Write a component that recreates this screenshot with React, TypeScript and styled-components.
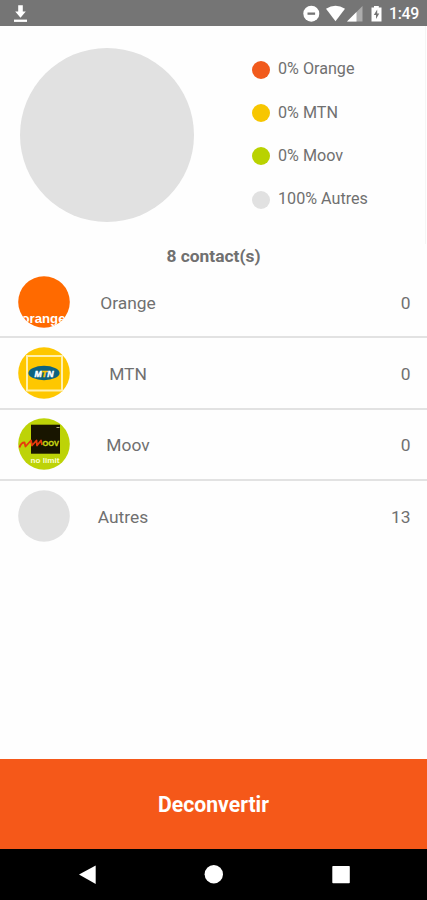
import React from "react";
import styled, { createGlobalStyle } from "styled-components";

const GlobalStyle = createGlobalStyle`
  * { box-sizing: border-box; }
  body { margin: 0; background: #fff; font-family: Roboto, sans-serif; color: #707070; }
`;

const Screen = styled.div`
  width: 427px;
  height: 900px;
  display: flex;
  flex-direction: column;
  background: #fefefe;
  overflow: hidden;
`;

const StatusBar = styled.header`
  height: 26px;
  flex: none;
  background: #757575;
  display: flex;
  justify-content: space-between;
`;

const StatusIcons = styled.svg`
  display: block;
  height: 26px;
`;

const StatusRight = styled.div`
  display: flex;
`;

const Clock = styled.span`
  width: 38px;
  color: #fff;
  font-size: 15.8px;
  font-weight: 500;
  line-height: 28px;
  letter-spacing: -0.3px;
`;

const Summary = styled.section`
  height: 218px;
  width: 426px;
  flex: none;
  display: flex;
  padding: 22px 0 0 20px;
  border-right: 1px solid #f5f5f5;
`;

const Pie = styled.div`
  width: 174px;
  height: 174px;
  border-radius: 50%;
  background: #e1e1e1;
`;

const Legend = styled.ul`
  list-style: none;
  margin: 0 0 0 58px;
  padding: 0;
`;

const LegendItem = styled.li`
  height: 43.4px;
  display: flex;
  align-items: center;
  gap: 8px;
  font-size: 16.15px;
  line-height: 20px;
  white-space: nowrap;
`;

const Dot = styled.span<{ $color: string }>`
  width: 18px;
  height: 18px;
  border-radius: 50%;
  background: ${(p) => p.$color};
`;

const LegendLabel = styled.span`
  margin-top: -1px;
`;

const Title = styled.h1`
  margin: 0;
  height: 23px;
  flex: none;
  font-size: 17.4px;
  line-height: 25px;
  font-weight: 700;
  text-align: center;
`;

const List = styled.ul`
  list-style: none;
  margin: 0;
  padding: 0;
  flex: 1;
`;

const Row = styled.li`
  height: 71.3px;
  display: flex;
  align-items: center;
  padding: 0 16.5px 0 17.5px;
  border-bottom: 2px solid #e2e2e2;
  font-size: 17.4px;
  &:last-child { border-bottom: 0; height: 69.3px; }
`;

const Logo = styled.svg`
  width: 52px;
  height: 52px;
  display: block;
`;

const Name = styled.span<{ $width: number }>`
  width: ${(p) => p.$width}px;
  text-align: center;
  padding-top: 2px;
`;

const Count = styled.span`
  margin-left: auto;
  padding-top: 2px;
`;

const Action = styled.button`
  height: 90.5px;
  flex: none;
  border: 0;
  padding: 2px 0 0;
  background: #f55819;
  color: #fff;
  font: 700 21.2px/88px Roboto, sans-serif;
`;

const NavBar = styled.nav`
  height: 51px;
  flex: none;
  background: #000;
  display: flex;
`;

const NavIcons = styled.svg`
  display: block;
`;

const legend = [
  { color: "#f15a1c", label: "0% Orange" },
  { color: "#f7c600", label: "0% MTN" },
  { color: "#b9d200", label: "0% Moov" },
  { color: "#e1e1e1", label: "100% Autres" },
];

const OrangeLogo = () => (
  <Logo viewBox="0 0 52 52">
    <defs><clipPath id="orange"><circle cx="26" cy="26" r="25.8" /></clipPath></defs>
    <g clipPath="url(#orange)">
      <rect width="52" height="52" fill="#ff6a00" />
      <text x="25.5" y="47.2" textAnchor="middle" textLength="44" lengthAdjust="spacingAndGlyphs" fill="#fff" fontFamily="Liberation Sans, sans-serif" fontWeight="700" fontSize="13.5">orange</text>
    </g>
  </Logo>
);

const MtnLogo = () => (
  <Logo viewBox="0 0 52 52">
    <circle cx="26" cy="26" r="25.8" fill="#fec700" />
    <rect x="9" y="9" width="35" height="34.5" fill="none" stroke="#fff0ad" strokeWidth="2" />
    <ellipse cx="26" cy="26" rx="15.6" ry="7.2" fill="#0d6380" />
    <text x="26" y="29.5" textAnchor="middle" textLength="19" lengthAdjust="spacingAndGlyphs" fill="#fff" fontFamily="Liberation Sans, sans-serif" fontWeight="700" fontStyle="italic" fontSize="9.5" stroke="#fff" strokeWidth=".5">
      M<tspan fill="#fec700" stroke="#fec700">T</tspan>N
    </text>
  </Logo>
);

const MoovLogo = () => (
  <Logo viewBox="0 0 52 52">
    <circle cx="26" cy="26" r="25.8" fill="#bdd307" />
    <rect x="13" y="6.700" width="29" height="29" fill="#181500" />
    <path d="M38.500 9.500h3" stroke="#b7b18c" strokeWidth="1" />
    <path d="M1.500 29.500Q3 24.500 6.500 24.500L7.500 28.500 13 22.500 14 27.500 18.500 22.500 19 27.500 23 22.500 24 27" fill="none" stroke="#e63a0c" strokeWidth="1.8" strokeLinejoin="round" />
    <text x="24.500" y="27.600" textLength="16.500" lengthAdjust="spacingAndGlyphs" fill="#cbd914" stroke="#cbd914" strokeWidth=".3" fontFamily="Liberation Sans, sans-serif" fontWeight="700" fontSize="7.2">OOV</text>
    <text x="12.500" y="44.800" textLength="29" lengthAdjust="spacingAndGlyphs" fill="#fbffd0" fontFamily="Liberation Sans, sans-serif" fontWeight="700" fontSize="8">no limit</text>
  </Logo>
);

const OtherLogo = () => (
  <Logo viewBox="0 0 52 52"><circle cx="26" cy="26" r="25.8" fill="#e1e1e1" /></Logo>
);

const operators = [
  { name: "Orange", count: 0, width: 117, Icon: OrangeLogo },
  { name: "MTN", count: 0, width: 117, Icon: MtnLogo },
  { name: "Moov", count: 0, width: 117, Icon: MoovLogo },
  { name: "Autres", count: 13, width: 107, Icon: OtherLogo },
];

export default function App() {
  return (
    <>
      <GlobalStyle />
      <Screen>
        <StatusBar>
          <StatusIcons width="40" viewBox="0 0 40 26" fill="#fff">
            <path d="M18.2 5.3h4.6v6.2h3L20.5 17.7 15.2 11.500h3z" />
            <rect x="14" y="19.600" width="13" height="2.300" />
          </StatusIcons>
          <StatusRight>
            <StatusIcons width="89" viewBox="300 0 89 26" fill="#fff">
              <circle cx="311.300" cy="13.700" r="8" />
              <rect x="307.500" y="12.500" width="7.600" height="2.300" fill="#757575" />
              <path d="M326 8.800Q335.500 2.600 345 8.800L335.500 21.300Z" />
              <path d="M362.500 6v15.500h-15.500z" opacity=".4" />
              <path d="M356.500 12v9.500h-9.500z" />
              <path d="M371.500 7.500h2.500V6h4.800v1.500h2.700v14h-10z" />
              <path d="M377.200 9.500l-3.400 5.600h2.200v4l3.300-5.700h-2.100z" fill="#757575" />
            </StatusIcons>
            <Clock>1:49</Clock>
          </StatusRight>
        </StatusBar>
        <Summary>
          <Pie />
          <Legend>
            {legend.map((item) => (
              <LegendItem key={item.label}>
                <Dot $color={item.color} />
                <LegendLabel>{item.label}</LegendLabel>
              </LegendItem>
            ))}
          </Legend>
        </Summary>
        <Title>8 contact(s)</Title>
        <List>
          {operators.map(({ name, count, width, Icon }) => (
            <Row key={name}>
              <Icon />
              <Name $width={width}>{name}</Name>
              <Count>{count}</Count>
            </Row>
          ))}
        </List>
        <Action type="button">Deconvertir</Action>
        <NavBar>
          <NavIcons width="427" height="51" viewBox="0 849 427 51" fill="#fff">
            <path d="M79 874.500 95.700 865.500v18.500z" />
            <circle cx="213.800" cy="874.200" r="9.200" />
            <rect x="332.300" y="866" width="17.500" height="17.200" rx=".8" />
          </NavIcons>
        </NavBar>
      </Screen>
    </>
  );
}
